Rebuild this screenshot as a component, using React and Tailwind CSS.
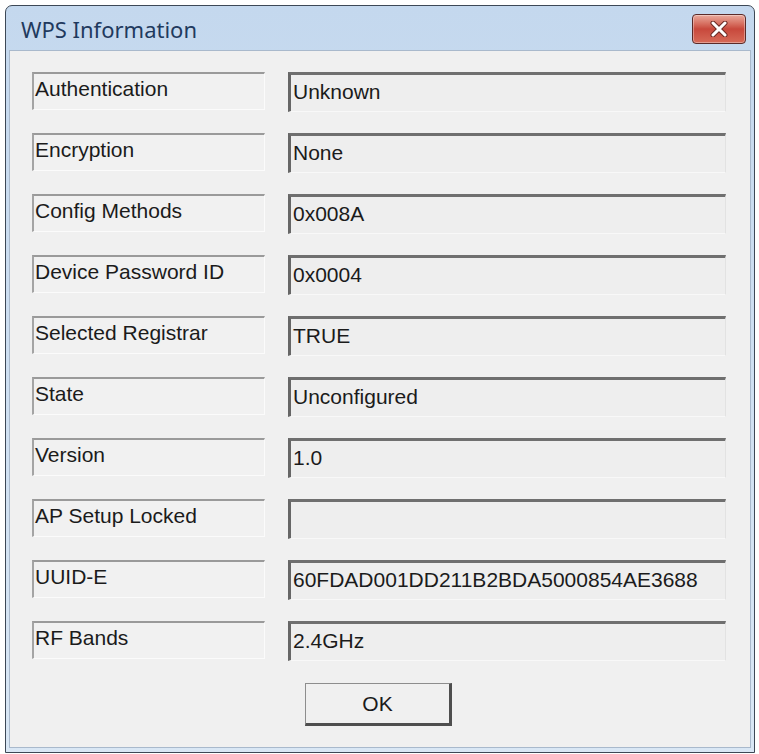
import React from "react";

const rows = [
  { label: "Authentication", value: "Unknown" },
  { label: "Encryption", value: "None" },
  { label: "Config Methods", value: "0x008A" },
  { label: "Device Password ID", value: "0x0004" },
  { label: "Selected Registrar", value: "TRUE" },
  { label: "State", value: "Unconfigured" },
  { label: "Version", value: "1.0" },
  { label: "AP Setup Locked", value: "" },
  { label: "UUID-E", value: "60FDAD001DD211B2BDA5000854AE3688" },
  { label: "RF Bands", value: "2.4GHz" },
];

const InfoRow = ({ label, value }) => (
  <div className="flex items-start gap-[23px]">
    <div className="w-[233px] h-[38px] border-t-2 border-l-2 border-b border-r border-t-[#9a9a9a] border-l-[#a4a4a4] border-b-[#fbfbfb] border-r-[#fbfbfb] bg-[#f1f1f1] pl-[1px] pt-[3px] leading-[24px]">
      {label}
    </div>
    <div className="w-[438px] h-[40px] border-t-[3px] border-l-[3px] border-b border-r border-t-[#6f6f6f] border-l-[#666666] border-b-[#f8f8f8] border-r-[#e2e2e2] bg-[#eeeeee] pl-[2px] pt-[5px] leading-[24px]">
      {value}
    </div>
  </div>
);

const App = () => {
  return (
    <div className="w-[759px] h-[754px] bg-white pt-[5px] pl-[5px]">
      <div className="w-[750px] h-[748px] rounded-t-[7px] border border-[#3d4856] bg-gradient-to-b from-[#c4d8ee] to-[#d9e7f5] flex flex-col px-[3px] pb-[4px]">
        {/* title bar */}
        <div className="h-[44px] flex items-start justify-between pl-[12px] pr-[5px]">
          <span className="mt-[10px] text-[22px] leading-[26px] text-[#1f3a5e] font-['Noto_Sans',sans-serif]">
            WPS Information
          </span>
          <div className="mt-[8px] w-[54px] h-[30px] rounded-[4px] border border-[#5b2a28] bg-gradient-to-b from-[#e9a99c] via-[#c8483c] to-[#d66a58] flex items-center justify-center shadow-[inset_0_0_0_1px_rgba(255,255,255,0.35)]">
            <svg width="20" height="16" viewBox="0 0 20 16">
              <path d="M4 2 L16 14 M16 2 L4 14" stroke="#6b2a24" strokeWidth="5" strokeLinecap="round" />
              <path d="M4 2 L16 14 M16 2 L4 14" stroke="#ffffff" strokeWidth="3" strokeLinecap="round" />
            </svg>
          </div>
        </div>
        {/* body */}
        <div className="flex-1 bg-[#f0f0f0] border border-[#a9b9cc] pl-[22px] pt-[21px] text-[21px] text-[#1b1b1b] font-['Liberation_Sans',Arial,sans-serif]">
          <div className="flex flex-col gap-[21px]">
            {rows.map((r) => (
              <InfoRow key={r.label} label={r.label} value={r.value} />
            ))}
          </div>
          <div className="flex mt-[22px] pl-[273px]">
            <button className="w-[147px] h-[43px] border-t border-l border-b-[3px] border-r-[3px] border-t-[#8d8d8d] border-l-[#8d8d8d] border-b-[#4e4e4e] border-r-[#4e4e4e] bg-[#f0f0f0] text-[21px] text-[#1b1b1b] flex items-center justify-center">
              OK
            </button>
          </div>
        </div>
      </div>
    </div>
  );
};

export default App;
